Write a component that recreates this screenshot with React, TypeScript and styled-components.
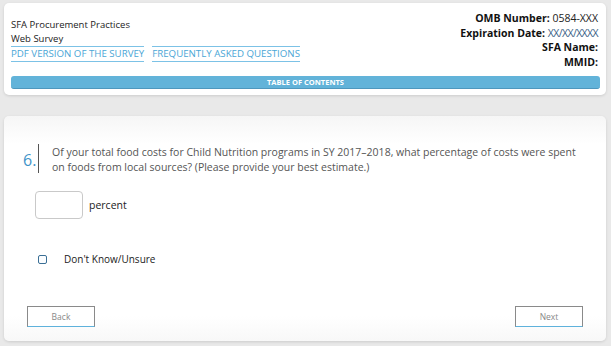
import React from 'react';
import styled, { createGlobalStyle } from 'styled-components';

const GlobalStyle = createGlobalStyle`
  html, body {
    margin: 0;
    padding: 0;
    background: #e9e9e9;
    font-family: "Open Sans", "Noto Sans", sans-serif;
  }
`;

const Page = styled.div`
  width: 611px;
  height: 346px;
  padding: 3px 5px 0 4px;
  box-sizing: border-box;
  display: flex;
  flex-direction: column;
  gap: 21px;
`;

const Card = styled.div<{ $height: number }>`
  background: #fff;
  border-radius: 5px;
  box-shadow: 0 1px 3px rgba(0, 0, 0, 0.12);
  height: ${p => p.$height}px;
  box-sizing: border-box;
`;

const Header = styled(Card)`
  padding: 8px 6px 0 7px;
  display: flex;
  flex-direction: column;
`;

const TopRow = styled.div`
  display: flex;
  justify-content: space-between;
  align-items: flex-start;
`;

const Title = styled.div`
  padding-top: 7px;
  font-size: 9.5px;
  line-height: 14px;
  color: #222;
`;

const Links = styled.div`
  display: flex;
  gap: 8px;
`;

const NavLink = styled.a`
  color: #4aa6d6;
  font-size: 9.7px;
  line-height: 14px;
  text-decoration: none;
  border-top: 1px solid #7cc2e6;
  border-bottom: 1px solid #7cc2e6;
  cursor: pointer;
`;

const Meta = styled.div`
  text-align: right;
  font-size: 10.5px;
  line-height: 14.5px;
  color: #111;
  padding-right: 2px;
`;

const Label = styled.b`
  font-weight: 700;
`;

const Value = styled.span<{ $muted?: boolean }>`
  color: ${p => (p.$muted ? '#3b5f86' : '#222')};
  letter-spacing: ${p => (p.$muted ? '-0.6px' : '0')};
`;

const TocBar = styled.div`
  margin-top: 7px;
  height: 12px;
  border-radius: 3px;
  background: #62b3d9;
  border-bottom: 1px solid #4e97bd;
  color: #fff;
  font-size: 7.5px;
  font-weight: 700;
  line-height: 12px;
  text-align: center;
`;

const Main = styled(Card)`
  padding: 28px 15px 0 19px;
  display: flex;
  flex-direction: column;
  background: linear-gradient(#f6f6f6, #fff 28px, #fff 200px, #f8f8f8);
`;

const Question = styled.div`
  display: flex;
  align-items: flex-start;
`;

const Number = styled.div`
  color: #3f94c9;
  font-size: 16px;
  line-height: 16px;
  width: 23px;
  padding-top: 8px;
`;

const Divider = styled.div`
  width: 2px;
  height: 29px;
  background: #555;
  margin-right: 13px;
`;

const QuestionText = styled.div`
  color: #555;
  font-size: 10.5px;
  line-height: 14.5px;
  margin-top: 1px;
`;

const AnswerRow = styled.div`
  display: flex;
  align-items: center;
  gap: 6px;
  margin: 17px 0 0 12px;
`;

const NumberInput = styled.input`
  width: 48px;
  height: 28px;
  box-sizing: border-box;
  border: 1px solid #c9c9c9;
  border-radius: 4px;
  outline: none;
`;

const SmallText = styled.span<{ $size?: number }>`
  font-size: ${p => p.$size ?? 10.5}px;
  color: #222;
`;

const CheckRow = styled.label`
  display: flex;
  align-items: center;
  gap: 17px;
  margin: 33px 0 0 15px;
`;

const Box = styled.span`
  width: 7px;
  height: 7px;
  border: 1px solid #3a6f95;
  border-radius: 2px;
  background: #fbfdff;
`;

const Footer = styled.div`
  display: flex;
  justify-content: space-between;
  margin: 40px 8px 0 4px;
`;

const NavButton = styled.button`
  width: 68px;
  height: 21px;
  box-sizing: border-box;
  background: #fff;
  border: 1px solid #8a8a8a;
  border-bottom: 1px solid #5fb2dc;
  color: #888;
  font-family: inherit;
  font-size: 8.5px;
  padding: 0;
  cursor: pointer;
`;

export default function App() {
  return (
    <>
      <GlobalStyle />
      <Page>
        <Header $height={92}>
          <TopRow>
            <Title>
              <div>SFA Procurement Practices</div>
              <div>Web Survey</div>
              <Links>
                <NavLink>PDF VERSION OF THE SURVEY</NavLink>
                <NavLink>FREQUENTLY ASKED QUESTIONS</NavLink>
              </Links>
            </Title>
            <Meta>
              <div><Label>OMB Number:</Label> <Value>0584-XXX</Value></div>
              <div><Label>Expiration Date:</Label> <Value $muted>XX/XX/XXXX</Value></div>
              <div><Label>SFA Name:</Label></div>
              <div><Label>MMID:</Label></div>
            </Meta>
          </TopRow>
          <TocBar>TABLE OF CONTENTS</TocBar>
        </Header>
        <Main $height={225}>
          <Question>
            <Number>6.</Number>
            <Divider />
            <QuestionText>
              Of your total food costs for Child Nutrition programs in SY 2017–2018, what percentage of costs were spent
              on foods from local sources? (Please provide your best estimate.)
            </QuestionText>
          </Question>
          <AnswerRow>
            <NumberInput type="text" />
            <SmallText>percent</SmallText>
          </AnswerRow>
          <CheckRow>
            <Box />
            <SmallText $size={10}>Don't Know/Unsure</SmallText>
          </CheckRow>
          <Footer>
            <NavButton>Back</NavButton>
            <NavButton>Next</NavButton>
          </Footer>
        </Main>
      </Page>
    </>
  );
}
